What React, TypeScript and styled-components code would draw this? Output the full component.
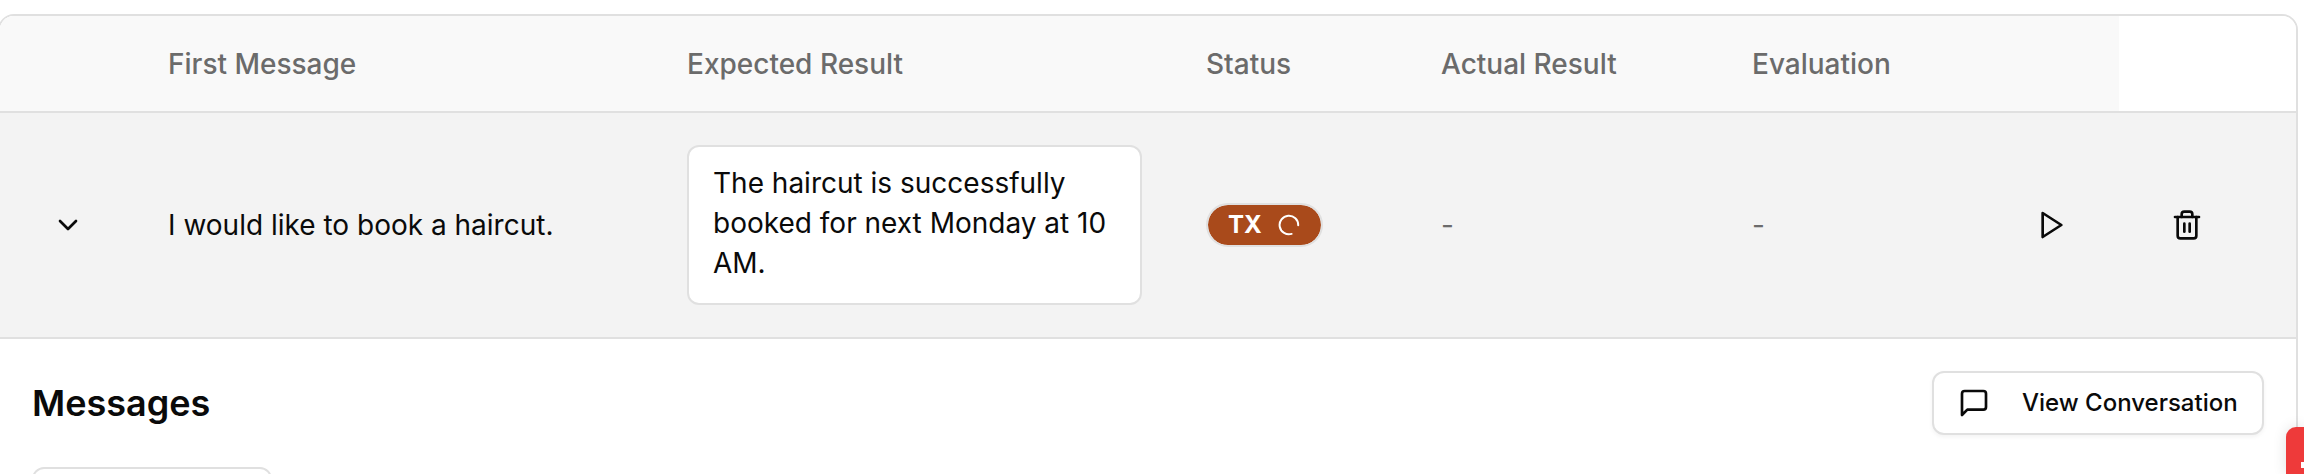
import React from "react";
import styled, { createGlobalStyle } from "styled-components";
import { ChevronDown, Trash2 } from "lucide-react";

const GlobalStyle = createGlobalStyle`
  * { box-sizing: border-box; }
  body {
    margin: 0;
    background: #fff;
    color: #0a0a0a;
    font-family: Inter, sans-serif;
    font-size: 28px;
    line-height: 40px;
    overflow: hidden;
  }
  svg { flex: none; }
`;

const Page = styled.div`
  height: 474px;
  padding-top: 14px;
  overflow: hidden;
`;

const TableCard = styled.section`
  width: 2300px;
  height: 800px;
  margin-left: -2px;
  border: 2px solid #e0e0e0;
  border-radius: 16px;
  overflow: hidden;
`;

const Row = styled.div<{ $height: number; $active?: boolean }>`
  display: grid;
  grid-template-columns: 136px 519px 519px 235px 311px 271px 128px 177px;
  height: ${(p) => p.$height}px;
  border-bottom: 2px solid #e0e0e0;
  background: ${(p) => (p.$active ? "#f3f3f3" : "#fff")};
`;

const HeadCell = styled.div`
  display: flex;
  align-items: center;
  padding-left: 32px;
  background: #f9f9f9;
  color: #6b6b6b;
  font-weight: 500;
`;

const Cell = styled.div<{ $muted?: boolean; $inset?: number }>`
  display: flex;
  align-items: center;
  padding-left: ${(p) => p.$inset ?? 32}px;
  color: ${(p) => (p.$muted ? "#6b6b6b" : "inherit")};
`;

const Expected = styled.div`
  width: 455px;
  height: 160px;
  padding: 16px 24px;
  border: 2px solid #e0e0e0;
  border-radius: 12px;
  background: #fff;
`;

const StatusBadge = styled.span`
  display: flex;
  align-items: center;
  gap: 16px;
  width: 117px;
  height: 44px;
  padding: 0 20px;
  border: 2px solid #e0e0e0;
  border-radius: 22px;
  background: #a94a1b;
  background-clip: padding-box;
  color: #fff;
  font-size: 24px;
  font-weight: 700;
`;

const Details = styled.div`
  padding: 32px;
`;

const DetailsHeader = styled.header`
  display: flex;
  align-items: center;
  justify-content: space-between;
  height: 64px;
`;

const Title = styled.h2`
  margin: 0;
  font-size: 36px;
  font-weight: 600;
`;

const OutlineButton = styled.button`
  display: flex;
  align-items: center;
  gap: 32px;
  width: 332px;
  height: 64px;
  padding: 0 0 0 24px;
  border: 2px solid #e0e0e0;
  border-radius: 12px;
  background: #fff;
  box-shadow: 0 2px 4px rgba(0, 0, 0, 0.05);
  color: #0a0a0a;
  font: 500 24px/32px Inter, sans-serif;
  white-space: nowrap;
`;

const MessageCard = styled.div`
  width: 240px;
  height: 200px;
  margin-top: 32px;
  border: 2px solid #e0e0e0;
  border-radius: 12px;
`;

const CornerTab = styled.div`
  position: absolute;
  top: 427px;
  right: 0;
  width: 18px;
  height: 47px;
  border-top-left-radius: 10px;
  background: #ee3a3a;
  box-shadow: 0 0 14px rgba(0, 0, 0, 0.12);
  overflow: hidden;
`;

const TabMark = styled.span`
  display: block;
  width: 3px;
  height: 6px;
  margin: 35px 0 0 15px;
  background: #fff;
`;

const LineIcon = styled.svg.attrs({
  width: 32,
  height: 32,
  viewBox: "0 0 24 24",
  fill: "none",
  stroke: "currentColor",
  strokeWidth: 2,
  strokeLinecap: "round",
  strokeLinejoin: "round",
})``;

const PlayIcon = () => (
  <LineIcon>
    <polygon points="5 3 19 12 5 21 5 3" />
  </LineIcon>
);

const MessageIcon = () => (
  <LineIcon>
    <path d="M21 15a2 2 0 0 1-2 2H7l-4 4V5a2 2 0 0 1 2-2h14a2 2 0 0 1 2 2z" />
  </LineIcon>
);

const Spinner = () => (
  <svg width="22" height="22" viewBox="0 0 22 22" fill="none" stroke="#fff" strokeWidth="2" strokeLinecap="round">
    <path d="M20.2 11.3A9.3 9.3 0 1 0 13.6 19.9" />
  </svg>
);

export default function App() {
  return (
    <Page>
      <GlobalStyle />
      <TableCard>
        <Row $height={97}>
          <HeadCell />
          <HeadCell>First Message</HeadCell>
          <HeadCell>Expected Result</HeadCell>
          <HeadCell>Status</HeadCell>
          <HeadCell>Actual Result</HeadCell>
          <HeadCell>Evaluation</HeadCell>
          <HeadCell />
        </Row>
        <Row $height={226} $active>
          <Cell $inset={52}><ChevronDown size={32} /></Cell>
          <Cell>I would like to book a haircut.</Cell>
          <Cell><Expected>The haircut is successfully booked for next Monday at 10 AM.</Expected></Cell>
          <Cell><StatusBadge>TX<Spinner /></StatusBadge></Cell>
          <Cell $muted>-</Cell>
          <Cell $muted>-</Cell>
          <Cell $inset={45}><PlayIcon /></Cell>
          <Cell $inset={52}><Trash2 size={32} /></Cell>
        </Row>
        <Details>
          <DetailsHeader>
            <Title>Messages</Title>
            <OutlineButton><MessageIcon />View Conversation</OutlineButton>
          </DetailsHeader>
          <MessageCard />
        </Details>
      </TableCard>
      <CornerTab><TabMark /></CornerTab>
    </Page>
  );
}
